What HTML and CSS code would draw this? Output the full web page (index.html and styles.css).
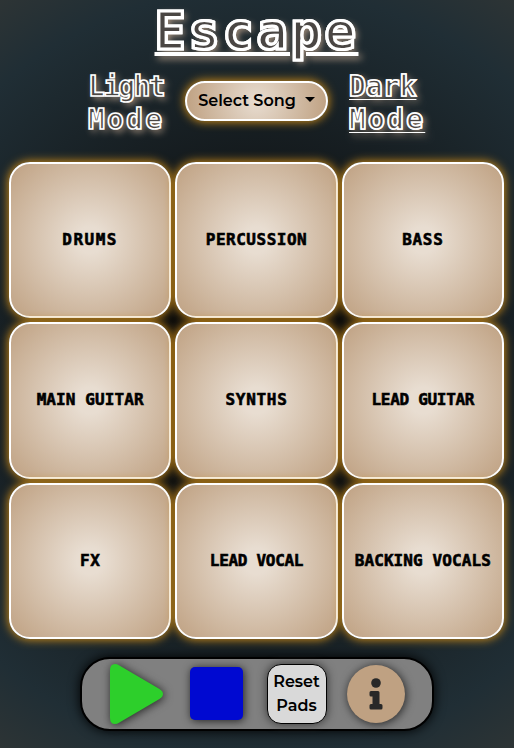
FILE: index.html
```html
<!DOCTYPE html>
<html lang="en">
<head>
<meta charset="utf-8">
<title>Escape</title>
<link rel="stylesheet" href="styles.css">
</head>
<body>
<h1 class="title">Escape</h1>
<header class="controls">
  <div class="mode light"><span class="w1">Light</span><br><span class="w2">Mode</span></div>
  <button class="song">Select Song<i class="caret"></i></button>
  <div class="mode dark"><span class="w3">Dark</span><br><span class="w2">Mode</span></div>
</header>
<main class="pads">
  <button class="pad drums">DRUMS</button>
  <button class="pad percussion">PERCUSSION</button>
  <button class="pad bass">BASS</button>
  <button class="pad">MAIN GUITAR</button>
  <button class="pad synths">SYNTHS</button>
  <button class="pad guitar">LEAD GUITAR</button>
  <button class="pad fx">FX</button>
  <button class="pad vocal">LEAD VOCAL</button>
  <button class="pad">BACKING VOCALS</button>
</main>
<footer class="transport">
  <svg class="play" viewBox="0 0 53 60"><path d="M0 6Q0 0 5 0Q7 0 9 1.200L49.500 25Q53 27.200 53 30Q53 32.800 49.500 35L9 58.800Q7 60 5 60Q0 60 0 54Z"/></svg>
  <div class="stop"></div>
  <button class="reset">Reset<br>Pads</button>
  <svg class="info" viewBox="0 0 58 58"><circle class="disc" cx="29" cy="29" r="29"/><circle cx="29" cy="18" r="4.800"/><path d="M24 26H31Q32.500 26 32.500 27.500V39H34Q35.500 39 35.500 40.500V43Q35.500 44.500 34 44.500H24Q22.500 44.500 22.500 43V40.500Q22.500 39 24 39H25.500V31.500H24Q22.500 31.500 22.500 30V27.500Q22.500 26 24 26Z"/></svg>
</footer>
</body>
</html>
```
FILE: styles.css
```css
* { box-sizing: border-box; }
html { height: 100%; }
body {
  margin: 0;
  padding-right: 1px;
  height: 748px;
  display: flex;
  flex-direction: column;
  align-items: center;
  background: radial-gradient(circle, #0c0c0c 20%, #202e35 85%, #2d3435 100%);
}
button { margin: 0; padding: 0; color: #000; }
.title, .mode {
  font-family: "DejaVu Sans Mono", monospace;
  font-weight: 700;
  color: #4a4643;
  -webkit-text-stroke: 3.200px #fff;
  text-shadow: 3px 3px 7px #b39b86;
}
.title {
  margin: 0;
  height: 76px;
  font-size: 52px;
  line-height: 62px;
  letter-spacing: 2.690px;
  white-space: nowrap;
  text-decoration: underline #fff 4px;
  text-underline-offset: 3px;
}
.controls {
  width: 337px;
  height: 86px;
  display: flex;
  justify-content: space-between;
}
.mode {
  width: 76px;
  font-size: 28px;
  line-height: 33px;
  margin-top: -6px;
  white-space: nowrap;
  -webkit-text-stroke-width: 1.700px;
}
.light { margin-left: 0; }
.dark { text-decoration: underline #fff 1px; text-underline-offset: 3px; }
.w1 { letter-spacing: -1.700px; }
.w2 { letter-spacing: 2.200px; }
.w3 { letter-spacing: 0; }
.song {
  width: 143px;
  height: 40px;
  margin-top: 5px;
  border: 2px solid #fff;
  border-radius: 20px;
  background: radial-gradient(circle, #e8ddd1, #bfa182);
  box-shadow: 0 0 10px 1px #c98a1a;
  font: 600 16px/24px Montserrat, Inter, sans-serif;
  white-space: nowrap;
}
.caret {
  display: inline-block;
  margin-left: 9px;
  vertical-align: 4px;
  border: 5px solid transparent;
  border-top-color: #000;
  border-bottom: 0;
}
.pads {
  width: 495px;
  height: 477px;
  display: grid;
  grid-template: repeat(3, 1fr) / repeat(3, 1fr);
  gap: 4px;
}
.pad {
  border: 2px solid #fff;
  border-radius: 21px;
  background: radial-gradient(circle, #e8ddd1 12%, #bfa182 100%);
  box-shadow: 0 0 10px 1px #c98a1a;
  font: 700 16px/24px "DejaVu Sans Mono", monospace;
  -webkit-text-stroke: 0.600px #000;
  letter-spacing: 0.100px;
  white-space: nowrap;
}
.drums { letter-spacing: 1.500px; }
.percussion { letter-spacing: 0.500px; }
.bass { letter-spacing: 0.700px; }
.synths { letter-spacing: 0.700px; }
.guitar { letter-spacing: -0.300px; }
.fx { letter-spacing: 0.600px; }
.vocal { letter-spacing: -0.300px; }
.transport {
  width: 354px;
  height: 74px;
  margin-top: 18px;
  padding: 0 27px 1px 28px;
  display: flex;
  align-items: center;
  gap: 27px;
  border: 2px solid #000;
  border-radius: 30px;
  background: #808080;
  box-shadow: 0 0 12px #000;
}
.play { width: 53px; height: 60px; fill: #2dcf2b; filter: drop-shadow(1px 1px 5px #222); }
.stop { width: 53px; height: 53px; border-radius: 5px; background: #0009d1; box-shadow: 1px 1px 8px #222; }
.reset {
  width: 60px;
  height: 60px;
  margin-left: -3px;
  border: 1px solid #000;
  border-radius: 14px;
  background: #d9d9d9;
  box-shadow: 0 0 10px #333;
  font: 600 16px/24px Montserrat, Inter, sans-serif;
}
.info { width: 58px; height: 58px; margin-left: -7px; fill: #282828; filter: drop-shadow(1px 1px 5px #222); }
.disc { fill: #bfa182; }
```
